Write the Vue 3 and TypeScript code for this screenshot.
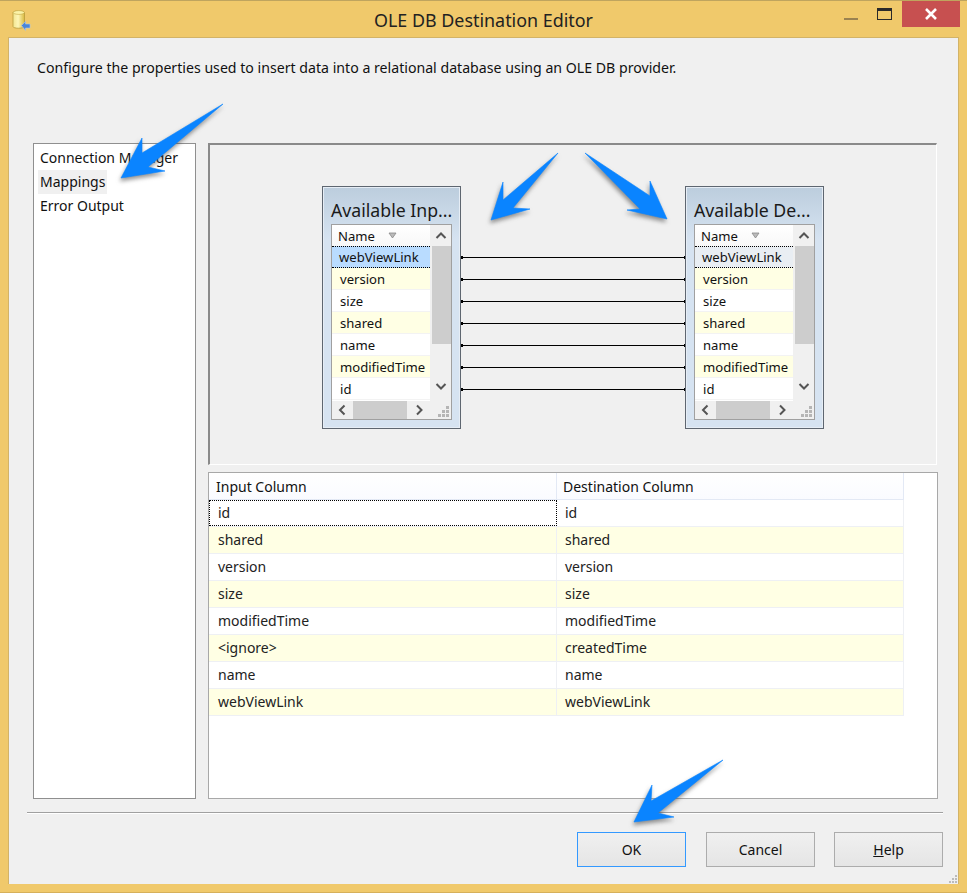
<script setup lang="ts">
interface Pair { input: string; dest: string }
const rows: string[] = ['webViewLink', 'version', 'size', 'shared', 'name', 'modifiedTime', 'id']
const mappings: Pair[] = [
  { input: 'id', dest: 'id' },
  { input: 'shared', dest: 'shared' },
  { input: 'version', dest: 'version' },
  { input: 'size', dest: 'size' },
  { input: 'modifiedTime', dest: 'modifiedTime' },
  { input: '<ignore>', dest: 'createdTime' },
  { input: 'name', dest: 'name' },
  { input: 'webViewLink', dest: 'webViewLink' },
]
const arrows: string[] = [
  '223,103 148,166 165,170 121,177 142,137 142,152',
  '558,152 513,207 530,208 491,219 503,181 503,199',
  '585,152 640,208 627,209 667,218 650,180 650,195',
  '723,759 658,812 674,816 634,821 652,784 651,800',
]
const lineYs: number[] = [257, 279, 301, 323, 345, 367, 389]
const nodes = [
  { cls: 'node-in', title: 'Available Inp...', first: 'first-sel' },
  { cls: 'node-out', title: 'Available De...', first: 'first-dim' },
]
</script>

<template>
  <div class="window">
    <header class="titlebar">
      <svg class="appicon" width="20" height="22" viewBox="0 0 20 22">
        <defs>
          <linearGradient id="cyl" x1="0" x2="1" y1="0" y2="0">
            <stop offset="0" stop-color="#f3e58e" />
            <stop offset="0.45" stop-color="#fdf6b8" />
            <stop offset="1" stop-color="#d9b93e" />
          </linearGradient>
        </defs>
        <path d="M1 3.5C1 1.5 12.5 1.5 12.5 3.5V17.5C12.5 19.8 1 19.8 1 17.5Z" fill="url(#cyl)" stroke="#b89c3c" stroke-width="0.8" />
        <ellipse cx="6.8" cy="3.5" rx="5.6" ry="1.9" fill="#fbf3a8" stroke="#c2a745" stroke-width="0.6" />
        <path d="M9.5 16.5 13.5 12.5V15H18V19H13.5V21.5Z" fill="#4a86d8" stroke="#a9c6ee" stroke-width="0.6" />
      </svg>
      <h1 class="title">OLE DB Destination Editor</h1>
      <div class="controls">
        <span class="min"></span>
        <span class="max"></span>
        <span class="close">
          <svg width="14" height="12" viewBox="0 0 14 12">
            <path d="M2 1 12 11M12 1 2 11" stroke="#fff" stroke-width="2.6" fill="none" />
          </svg>
        </span>
      </div>
    </header>

    <main class="client">
      <p class="desc">Configure the properties used to insert data into a relational database using an OLE DB provider.</p>

      <div class="body">
        <nav class="pages">
          <div class="page">Connection Manager</div>
          <div class="page active">Mappings</div>
          <div class="page">Error Output</div>
        </nav>

        <section class="right">
          <div class="designer">
            <svg class="links" width="227" height="320" viewBox="0 0 227 320">
              <g v-for="y in lineYs" :key="y">
                <line x1="1" :y1="y - 144.5" x2="226" :y2="y - 144.5" stroke="#000" stroke-width="1" />
                <rect x="1" :y="y - 146" width="2" height="3" fill="#000" />
                <rect x="224" :y="y - 146" width="3" height="3" fill="#000" />
              </g>
            </svg>
            <div v-for="n in nodes" :key="n.cls" class="node" :class="n.cls">
              <div class="node-title">{{ n.title }}</div>
              <div class="node-list">
                <div class="node-main">
                  <div class="list-col">
                    <div class="list-head">
                      <span>Name</span>
                      <svg class="sort" width="9" height="7" viewBox="0 0 9 7"><path d="M1 1H8L4.5 6Z" fill="#bbb" stroke="#888" stroke-width="0.8" /></svg>
                    </div>
                    <div
                      v-for="(r, i) in rows"
                      :key="r"
                      class="list-row"
                      :class="[i === 0 ? n.first : '', i % 2 === 1 ? 'alt' : '']"
                    >{{ r }}</div>
                  </div>
                  <div class="vscroll">
                    <svg class="chev" width="14" height="21" viewBox="0 0 14 21"><path d="M2.5 13 7 8.5 11.5 13" stroke="#555" stroke-width="2" fill="none" /></svg>
                    <div class="vthumb"></div>
                    <div class="vspace"></div>
                    <svg class="chev" width="14" height="22" viewBox="0 0 14 22"><path d="M2.5 5 7 9.5 11.5 5" stroke="#555" stroke-width="2" fill="none" /></svg>
                  </div>
                </div>
                <div class="hscroll">
                  <svg class="chev" width="21" height="18" viewBox="0 0 21 18"><path d="M12.5 4.5 8 9 12.5 13.5" stroke="#555" stroke-width="2" fill="none" /></svg>
                  <div class="hthumb"></div>
                  <svg class="chev" width="24" height="18" viewBox="0 0 24 18"><path d="M10 4.5 14.5 9 10 13.5" stroke="#555" stroke-width="2" fill="none" /></svg>
                  <svg class="grip" width="12" height="12" viewBox="0 0 12 12">
                    <path d="M9 0h3v3H9ZM5 4h3v3H5ZM9 4h3v3H9ZM1 8h3v3H1ZM5 8h3v3H5ZM9 8h3v3H9Z" fill="#b5b5b5" />
                  </svg>
                </div>
              </div>
            </div>
          </div>

          <div class="grid">
            <div class="grid-row grid-head">
              <div class="cell">Input Column</div>
              <div class="cell">Destination Column</div>
            </div>
            <div
              v-for="(m, i) in mappings"
              :key="m.dest"
              class="grid-row"
              :class="{ alt: i % 2 === 1 }"
            >
              <div class="cell" :class="{ focus: i === 0 }">{{ m.input }}</div>
              <div class="cell">{{ m.dest }}</div>
            </div>
          </div>
        </section>
      </div>

      <div class="rule"></div>

      <footer class="buttons">
        <button class="btn default">OK</button>
        <button class="btn">Cancel</button>
        <button class="btn"><u>H</u>elp</button>
      </footer>

      <svg class="resize" width="10" height="10" viewBox="0 0 10 10">
        <path d="M7 1h2v2H7ZM4 4h2v2H4ZM7 4h2v2H7ZM1 7h2v2H1ZM4 7h2v2H4ZM7 7h2v2H7Z" fill="#bbb" />
      </svg>
    </main>

    <svg class="arrows" width="967" height="893" viewBox="0 0 967 893">
      <polygon v-for="a in arrows" :key="a" :points="a" fill="#0a84ff" stroke="#0a84ff" stroke-width="0.6" stroke-linejoin="round" />
    </svg>
  </div>
</template>

<style scoped>
.window {
  position: relative;
  width: 967px;
  height: 893px;
  box-sizing: border-box;
  display: flex;
  flex-direction: column;
  background: #f0c96b;
  border-top: 1px solid #bfa45e;
  border-bottom: 1px solid #d6b05a;
  font-family: "Noto Sans", "Open Sans", sans-serif;
  font-size: 14px;
  color: #111;
  overflow: hidden;
}
.titlebar {
  position: relative;
  height: 36px;
  flex: none;
  display: flex;
  align-items: flex-start;
  justify-content: center;
}
.appicon {
  position: absolute;
  left: 12px;
  top: 8px;
}
.title {
  margin: 8px 0 0;
  font-size: 17.9px;
  font-weight: 400;
  line-height: 22px;
  color: #222;
}
.controls {
  position: absolute;
  right: 7px;
  top: 0;
  display: flex;
  align-items: flex-start;
}
.min {
  width: 14px;
  height: 2px;
  margin-top: 17px;
  background: #9a8250;
}
.max {
  box-sizing: border-box;
  width: 15px;
  height: 12px;
  margin: 7px 10px 0 19px;
  border: 1px solid #2a2a2a;
  border-top-width: 3px;
}
.close {
  width: 58px;
  height: 26px;
  background: #c75050;
  display: flex;
  align-items: center;
  justify-content: center;
}
.client {
  position: relative;
  flex: 1;
  margin: 0 8px 8px;
  background: #f0f0f0;
  border-top: 1px solid #d2b368;
  border-left: 1px solid #d2b368;
  border-right: 1px solid #d2b368;
  display: flex;
  flex-direction: column;
}
.desc {
  margin: 20px 0 0 28px;
  line-height: 20px;
  height: 20px;
  font-size: 14.15px;
  color: #111;
}
.body {
  margin: 65px 0 0 24px;
  display: flex;
  gap: 12px;
}
.pages {
  box-sizing: border-box;
  width: 163px;
  height: 656px;
  flex: none;
  background: #fff;
  border: 1px solid #8f8f8f;
  padding: 2px 5px 2px 4px;
}
.page {
  height: 24px;
  line-height: 24px;
  padding: 0 2px;
  width: fit-content;
}
.page.active {
  background: #f0f0f0;
}
.right {
  width: 730px;
  flex: none;
  display: flex;
  flex-direction: column;
  gap: 7px;
}
.designer {
  position: relative;
  box-sizing: border-box;
  height: 322px;
  width: 729px;
  border-top: 2px solid #8a8a8a;
  border-left: 2px solid #8a8a8a;
  border-bottom: 1px solid #fff;
  border-right: 1px solid #fff;
  background: #f0f0f0;
}
.links {
  position: absolute;
  left: 250px;
  top: 0;
}
.node {
  position: absolute;
  top: 41px;
  box-sizing: border-box;
  width: 139px;
  height: 243px;
  border: 1px solid #5e6670;
  background: linear-gradient(#bccddd 0, #d6e3f1 52px, #d6e3f1 100%);
  padding: 0 8px;
  box-shadow: inset 0 0 0 1px #e6edf5;
}
.node-in { left: 112px; }
.node-out { left: 475px; }
.node-title {
  height: 37px;
  padding-top: 10px;
  box-sizing: border-box;
  font-size: 17.7px;
  line-height: 26px;
  color: #1a1a1a;
  white-space: nowrap;
}
.node-list {
  box-sizing: border-box;
  width: 121px;
  height: 196px;
  border: 1px solid #a0a0a0;
  background: #f0f0f0;
  display: flex;
  flex-direction: column;
}
.node-main {
  display: flex;
  height: 176px;
}
.list-col {
  width: 98px;
  background: #fff;
  font-size: 13.1px;
}
.list-head {
  height: 21px;
  line-height: 24px;
  padding-left: 6px;
  display: flex;
  align-items: center;
  gap: 13px;
  background: linear-gradient(#fff, #f8f8f8);
}
.list-head span { height: 24px; margin-top: 1px; }
.sort { margin-top: -1px; }
.list-row {
  box-sizing: border-box;
  height: 22px;
  line-height: 23px;
  padding-left: 8px;
  background: #fff;
  border-bottom: 1px solid #f3f3f3;
  white-space: nowrap;
}
.list-row.alt { background: #ffffe4; }
.first-sel {
  background: #b9dcff;
  border-top: 1px dotted #000;
  border-bottom: 1px dotted #000;
  padding-left: 7px;
  line-height: 20px;
}
.first-dim {
  background: #e9eef3;
  border-top: 1px dotted #000;
  border-bottom: 1px dotted #000;
  padding-left: 7px;
  line-height: 20px;
}
.vscroll {
  width: 20px;
  margin-left: 1px;
  display: flex;
  flex-direction: column;
  align-items: center;
}
.chev { display: block; flex: none; }
.vthumb {
  width: 19px;
  height: 98px;
  flex: none;
  background: #cdcdcd;
}
.vspace { flex: 1; }
.hscroll {
  position: relative;
  height: 18px;
  display: flex;
  align-items: center;
}
.hthumb {
  width: 54px;
  height: 18px;
  background: #cdcdcd;
}
.grip {
  position: absolute;
  right: 2px;
  bottom: 1px;
}
.grid {
  box-sizing: border-box;
  height: 327px;
  width: 730px;
  background: #fff;
  border: 1px solid #a8a8a8;
}
.grid-row {
  display: grid;
  grid-template-columns: 348px 347px;
  width: 695px;
  height: 27px;
  border-bottom: 1px solid #eef0f4;
  box-sizing: border-box;
  background: #fff;
}
.grid-row.alt { background: #ffffe4; }
.grid-head {
  height: 27px;
  background: linear-gradient(#fff, #fafbff);
  border-bottom: 1px solid #e3e9f5;
}
.cell {
  box-sizing: border-box;
  padding-left: 9px;
  line-height: 26px;
  border-right: 1px solid #eef0f4;
  color: #222;
}
.cell + .cell { padding-left: 8px; }
.grid-head .cell {
  padding-left: 7px;
  line-height: 27px;
  border-right-color: #e3e9f5;
  color: #111;
}
.grid-head .cell + .cell { padding-left: 6px; }
.cell.focus {
  border: 1px dotted #000;
  padding-left: 8px;
  line-height: 24px;
}
.rule {
  margin: 13px 15px 0 18px;
  height: 1px;
  background: #a0a0a0;
  border-bottom: 1px solid #fff;
}
.buttons {
  margin: 18px 15px 0 0;
  display: flex;
  justify-content: flex-end;
  gap: 19px;
}
.btn {
  box-sizing: border-box;
  width: 109px;
  height: 35px;
  padding: 0;
  border: 1px solid #acacac;
  background: linear-gradient(#f0f0f0, #e5e5e5);
  font: inherit;
  color: #111;
}
.btn.default { border-color: #3399ff; margin-right: 1px; }
.resize {
  position: absolute;
  right: 0;
  bottom: 0;
}
.arrows {
  position: absolute;
  left: 0;
  top: 0;
  pointer-events: none;
  filter: drop-shadow(-1px 3px 2px rgba(60, 60, 60, 0.55));
}
</style>
